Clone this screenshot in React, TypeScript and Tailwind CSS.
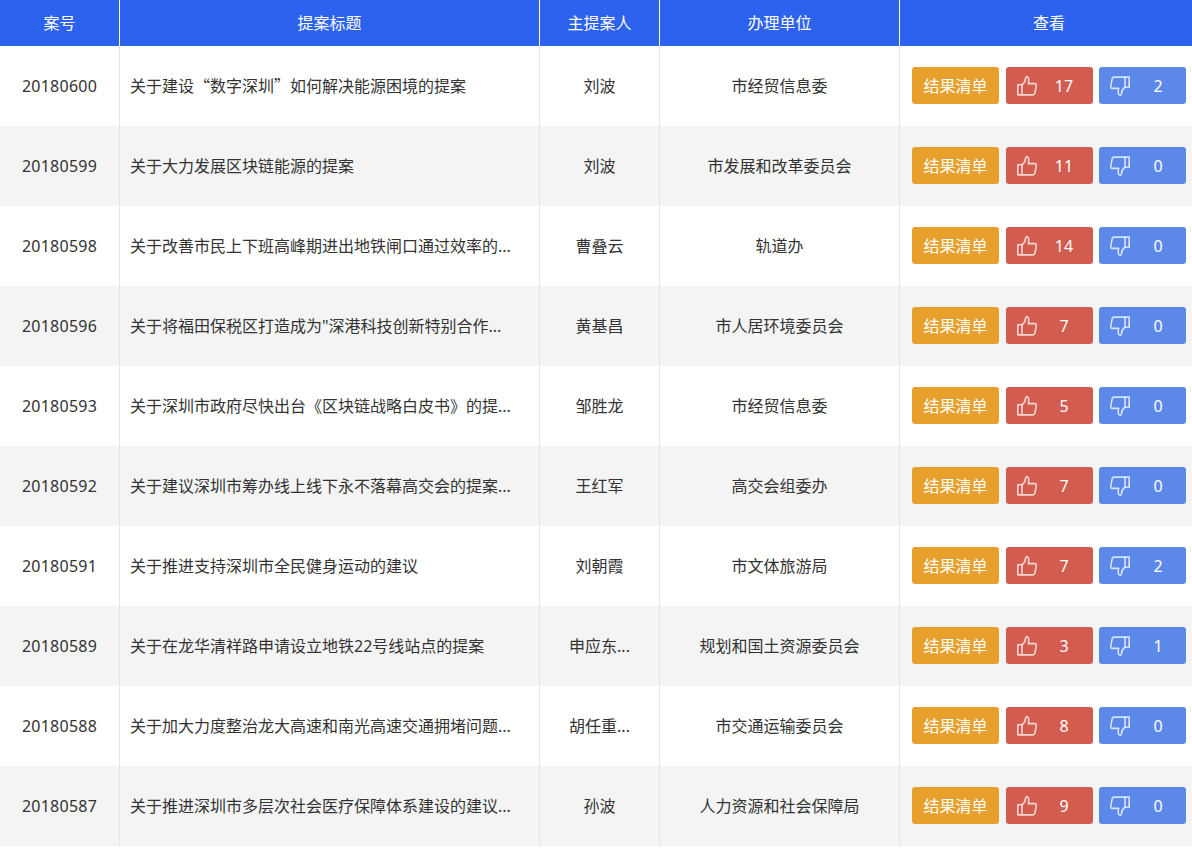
const rows = [
  ["20180600", <>关于建设<span className="leading-[0] [font-family:'Noto_Sans_CJK_SC',sans-serif]">“</span>数字深圳<span className="leading-[0] [font-family:'Noto_Sans_CJK_SC',sans-serif]">”</span>如何解决能源困境的提案</>, "刘波", "市经贸信息委", 17, 2],
  ["20180599", "关于大力发展区块链能源的提案", "刘波", "市发展和改革委员会", 11, 0],
  ["20180598", "关于改善市民上下班高峰期进出地铁闸口通过效率的...", "曹叠云", "轨道办", 14, 0],
  ["20180596", "关于将福田保税区打造成为\"深港科技创新特别合作...", "黄基昌", "市人居环境委员会", 7, 0],
  ["20180593", "关于深圳市政府尽快出台《区块链战略白皮书》的提...", "邹胜龙", "市经贸信息委", 5, 0],
  ["20180592", "关于建议深圳市筹办线上线下永不落幕高交会的提案...", "王红军", "高交会组委办", 7, 0],
  ["20180591", "关于推进支持深圳市全民健身运动的建议", "刘朝霞", "市文体旅游局", 7, 2],
  ["20180589", "关于在龙华清祥路申请设立地铁22号线站点的提案", "申应东...", "规划和国土资源委员会", 3, 1],
  ["20180588", "关于加大力度整治龙大高速和南光高速交通拥堵问题...", "胡任重...", "市交通运输委员会", 8, 0],
  ["20180587", "关于推进深圳市多层次社会医疗保障体系建设的建议...", "孙波", "人力资源和社会保障局", 9, 0],
] as const;

function ThumbUp({ className }: { className?: string }) {
  return (
    <svg viewBox="0 0 20 20" fill="none" stroke="currentColor" strokeWidth="1.6" strokeLinejoin="round" className={className}>
      <path d="M0.8 8.7H5V18.9H0.8Z" />
      <path d="M5 8.7C7 7.5 8.3 5.5 8.6 2.2C8.7 0.8 9.6 0.5 10.5 0.9C11.8 1.5 12.2 3.6 11.3 7.6H17.6C19 7.6 19.6 8.6 19.3 9.8L17.8 17.4C17.6 18.4 16.9 18.9 16 18.9H5" />
    </svg>
  );
}

function Vote({ color, count, down }: { color: string; count: number; down?: boolean }) {
  return (
    <button className={`flex h-[37px] w-[87px] items-center rounded-[3px] pl-[11px] text-white ${color} ${down ? "" : "pr-[2px]"}`}>
      <ThumbUp className={`h-5 w-5 shrink-0 text-white/75 ${down ? "rotate-180" : ""}`} />
      <span className="flex-1 text-center">{count}</span>
    </button>
  );
}

export default function App() {
  return (
    <div className="min-h-[860px] bg-white text-[16px] text-[#333] [font-family:'Noto_Sans','Noto_Sans_CJK_SC',sans-serif]">
      <table className="w-full table-fixed border-separate border-spacing-0 text-center">
        <colgroup>
          <col className="w-[120px]" />
          <col className="w-[420px]" />
          <col className="w-[120px]" />
          <col className="w-[240px]" />
          <col />
        </colgroup>
        <thead>
          <tr className="h-[46px] bg-[#2d62ef] text-white">
            <th className="border-r border-white font-normal">案号</th>
            <th className="border-r border-white font-normal">提案标题</th>
            <th className="border-r border-white font-normal">主提案人</th>
            <th className="border-r border-white font-normal">办理单位</th>
            <th className="pl-[6px] font-normal">查看</th>
          </tr>
        </thead>
        <tbody>
          {rows.map((r, i) => (
            <tr key={r[0]} className={`h-[80px] ${i % 2 ? "bg-[#f4f4f4]" : "bg-white"}`}>
              <td className="border-r border-[#e6e6e6] tracking-[0.25px]">{r[0]}</td>
              <td className="border-r border-[#e6e6e6] px-[10px] text-left">{r[1]}</td>
              <td className="border-r border-[#e6e6e6] px-[10px]">{r[2]}</td>
              <td className="border-r border-[#e6e6e6] px-[10px]">{r[3]}</td>
              <td className="pb-px pl-[12px]">
                <div className="flex items-center">
                  <button className="h-[37px] w-[87px] rounded-[3px] bg-[#e99f2c] text-white">结果清单</button>
                  <div className="ml-[7px]"><Vote color="bg-[#d35c50]" count={r[4]} /></div>
                  <div className="ml-[6px]"><Vote color="bg-[#5c88ea]" count={r[5]} down /></div>
                </div>
              </td>
            </tr>
          ))}
        </tbody>
      </table>
    </div>
  );
}
